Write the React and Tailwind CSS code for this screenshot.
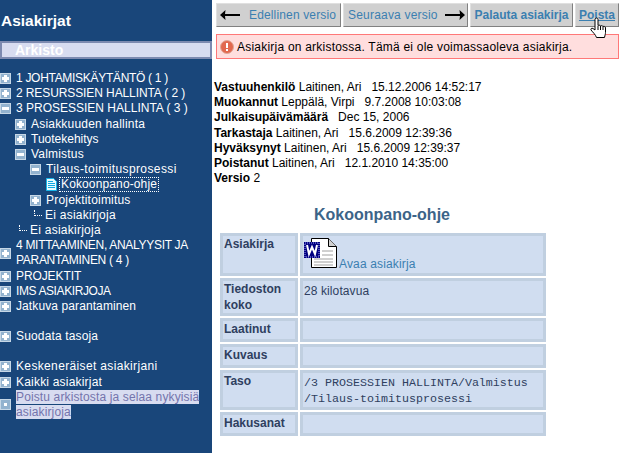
const mainFont = "font-['Liberation_Sans',Arial,sans-serif]";

function BoxIcon({ type = "plus" }) {
  return (
    <svg width="11" height="11" viewBox="0 0 11 11" className="shrink-0 block">
      <rect width="11" height="11" fill="#93b3cf" />
      <rect x="0.5" y="0.5" width="10" height="10" fill="none" stroke="#c6d7e6" />
      {type !== "dot" && <rect x="2" y="4" width="7" height="3" fill="#fff" />}
      {type === "plus" && <rect x="4" y="2" width="3" height="7" fill="#fff" />}
      {type === "dot" && <rect x="4" y="4" width="3" height="3" fill="#fff" />}
    </svg>
  );
}

function Row({ level = 0, icon = "plus", tracking = "", children }) {
  const indent = ["pl-0", "pl-[15px]", "pl-[30px]"][level];
  return (
    <div className={`flex items-center h-[15.2px] ${indent}`}>
      <BoxIcon type={icon} />
      <span className={`ml-[5px] whitespace-nowrap ${tracking}`}>{children}</span>
    </div>
  );
}

function EmptyRow({ level = 1 }) {
  const indent = level === 1 ? "pl-[19px]" : "pl-[34px]";
  return (
    <div className={`flex items-center h-[15.2px] ${indent}`}>
      <span className="w-[8px] h-[6px] mb-[5px] border-l border-b border-dotted border-white shrink-0" />
      <span className="ml-[3px] whitespace-nowrap tracking-[0.25px]">Ei asiakirjoja</span>
    </div>
  );
}

function Sidebar() {
  return (
    <aside className="w-[212px] shrink-0 bg-[#19467a] text-white text-[12px] leading-[15px]">
      <h1 className="pt-[12px] h-[41px] pl-[1px] text-[15.5px] leading-[18px] font-bold">Asiakirjat</h1>
      <div className="h-[18px] bg-[#d8dcf0] border-2 border-[#7d8ab0] pl-[13px] text-[14px] leading-[14px] font-bold text-white">
        Arkisto
      </div>

      <nav className="pt-[12px]">
        <Row tracking="tracking-[-0.3px]">1 JOHTAMISKÄYTÄNTÖ ( 1 )</Row>
        <Row tracking="tracking-[-0.1px]">2 RESURSSIEN HALLINTA ( 2 )</Row>
        <Row icon="minus">3 PROSESSIEN HALLINTA ( 3 )</Row>
        <Row level={1} tracking="tracking-[0.2px]">Asiakkuuden hallinta</Row>
        <Row level={1}>Tuotekehitys</Row>
        <Row level={1} icon="minus" tracking="tracking-[0.2px]">Valmistus</Row>
        <Row level={2} icon="minus" tracking="tracking-[0.4px]">Tilaus-toimitusprosessi</Row>
        <div className="flex items-center h-[15.2px] pl-[46px]">
          <svg width="11" height="13" viewBox="0 0 11 13" className="shrink-0">
            <path d="M0.5 0.5H7.5L10.5 3.5V12.5H0.5Z" fill="#e8fbff" stroke="#18b4e8" />
            <path d="M2 3.5H7M2 5.5H9M2 7.5H9M2 9.5H9" stroke="#10a8e0" />
          </svg>
          <span className="ml-[2px] px-[1px] h-[15px] border border-dotted border-white leading-[13px] tracking-[0.13px] whitespace-nowrap">
            Kokoonpano-ohje
          </span>
        </div>
        <Row level={2} tracking="tracking-[0.2px]">Projektitoimitus</Row>
        <EmptyRow level={2} />
        <EmptyRow level={1} />
        <div className="flex items-center">
          <BoxIcon />
          <span className="ml-[5px] leading-[15.2px] tracking-[-0.3px] whitespace-nowrap">
            4 MITTAAMINEN, ANALYYSIT JA
            <br />
            PARANTAMINEN ( 4 )
          </span>
        </div>
        <Row tracking="tracking-[-0.1px]">PROJEKTIT</Row>
        <Row tracking="tracking-[-0.4px]">IMS ASIAKIRJOJA</Row>
        <Row tracking="tracking-[0.1px]">Jatkuva parantaminen</Row>
        <div className="mt-[15px]">
          <Row tracking="tracking-[0.15px]">Suodata tasoja</Row>
        </div>
        <div className="mt-[15px]">
          <Row tracking="tracking-[0.35px]">Keskeneräiset asiakirjani</Row>
          <Row tracking="tracking-[0.2px]">Kaikki asiakirjat</Row>
        </div>
        <div className="flex items-center">
          <BoxIcon type="dot" />
          <span className="ml-[5px] leading-[15.2px] tracking-[0.13px] whitespace-nowrap">
            <span className="bg-[#d8dcf0] text-[#7474ac]">Poistu arkistosta ja selaa nykyisiä</span>
            <br />
            <span className="bg-[#d8dcf0] text-[#7474ac]">asiakirjoja</span>
          </span>
        </div>
      </nav>
    </aside>
  );
}

function ToolButton({ className = "", children }) {
  return (
    <div
      className={`flex items-center h-[24px] bg-[#d0d0d0] border border-[#e0e0e0] border-r-[#808080] border-b-[#808080] text-[#3b7fb0] whitespace-nowrap ${className}`}
    >
      {children}
    </div>
  );
}

function Arrow({ flip = false }) {
  return (
    <svg width="20" height="10" viewBox="0 0 20 10" className={flip ? "rotate-180" : ""}>
      <path d="M5.5 0L0 5L5.5 10L5 6H20V4H5Z" fill="#000" />
    </svg>
  );
}

function HandCursor() {
  return (
    <svg width="18" height="22" viewBox="0 0 18 22" className="absolute left-[590px] top-[17px]">
      <path
        d="M5.5 1.5C6.5 0.5 8 1 8 2.5V8.5C9 8 10 8 10.5 9C11.5 8.5 12.5 8.5 13 9.5C14 9 15.5 9.5 15.5 11V15.5C15.5 17 15 18 14.5 20.5H6.5C5.5 17.5 3 15.5 1 13C0.5 12 1.5 10.5 3 11.5L5 13V2.5Z"
        fill="#fff"
        stroke="#000"
      />
      <path d="M8 9V13M10.5 9V13M13 9.5V13" stroke="#000" fill="none" />
    </svg>
  );
}

function Cell({ label, rowClass, children }) {
  return (
    <div className={`grid grid-cols-[78px_246px] gap-[2px] leading-[16px] ${rowClass}`}>
      <div className="border-[3px] border-[#c0cfe0] bg-[#d0ddf0] font-bold text-[#2f3f5f] pl-[1px]">{label}</div>
      <div className="border-[3px] border-[#c0cfe0] bg-[#d0ddf0] text-[#2f3f5f] pl-[1px]">{children}</div>
    </div>
  );
}

const meta = [
  ["Vastuuhenkilö", "Laitinen, Ari \u00a0 15.12.2006 14:52:17"],
  ["Muokannut", "Leppälä, Virpi \u00a0 9.7.2008 10:03:08"],
  ["Julkaisupäivämäärä", "\u00a0 Dec 15, 2006"],
  ["Tarkastaja", "Laitinen, Ari \u00a0 15.6.2009 12:39:36"],
  ["Hyväksynyt", "Laitinen, Ari \u00a0 15.6.2009 12:39:37"],
  ["Poistanut", "Laitinen, Ari \u00a0 12.1.2010 14:35:00"],
  ["Versio", "2"],
];

export default function App() {
  return (
    <div className={`relative flex w-[623px] h-[453px] overflow-hidden bg-white text-[12px] leading-[15px] ${mainFont}`}>
      <Sidebar />

      <main className="flex-1 pl-[2px]">
        <div className="flex gap-[2px] pl-[2px] pt-[3px]">
          <ToolButton className="w-[125px] pl-[3px]">
            <Arrow />
            <span className="ml-[9px] tracking-[0.15px]">Edellinen versio</span>
          </ToolButton>
          <ToolButton className="w-[125px] pl-[4px]">
            <span className="tracking-[0.2px]">Seuraava versio</span>
            <span className="ml-[7px]"><Arrow flip /></span>
          </ToolButton>
          <ToolButton className="w-[103px] justify-center font-bold">Palauta asiakirja</ToolButton>
          <ToolButton className="w-[44px] justify-center font-bold underline">Poista</ToolButton>
        </div>

        <div className="flex items-center ml-[2px] mt-[7px] w-[403px] h-[25px] bg-[#ffdede] border border-[#ff7878] pl-[3px] text-black">
          <svg width="14" height="14" viewBox="0 0 14 14" className="shrink-0">
            <circle cx="7" cy="7" r="6.5" fill="#e2694f" stroke="#e0a898" />
            <rect x="6" y="3" width="2" height="5" fill="#fff" />
            <rect x="6" y="9" width="2" height="2" fill="#fff" />
          </svg>
          <span className="ml-[3px] pt-[1px] tracking-[0.22px] whitespace-nowrap">
            Asiakirja on arkistossa. Tämä ei ole voimassaoleva asiakirja.
          </span>
        </div>

        <div className="mt-[21px] text-black">
          {meta.map(([key, value]) => (
            <div key={key} className="h-[15.2px] whitespace-nowrap">
              <b>{key}</b> {value}
            </div>
          ))}
        </div>

        <h2 className="mt-[20px] w-[336px] text-center text-[16px] leading-[18px] font-bold text-[#3c6488]">Kokoonpano-ohje</h2>

        <div className="mt-[9px] ml-[6px] flex flex-col gap-[2px]">
          <Cell label="Asiakirja" rowClass="h-[43px]">
            <div className="flex items-end pt-[2px]">
              <svg width="33" height="30" viewBox="0 0 33 30" className="shrink-0">
                <path d="M7.5 0.5H24.5L32.5 8.5V29.5H7.5Z" fill="#fff" stroke="#000" />
                <path d="M24.5 0.5V8.5H32.5" fill="#d0d0d0" stroke="#000" />
                <path d="M18 13H29M18 17H29M10 21H29M10 24H29M10 27H29" stroke="#a0a0a0" />
                <rect x="0" y="4" width="16" height="16" fill="#000080" />
                <rect x="1" y="5" width="14" height="14" fill="none" stroke="#a0a0f0" strokeDasharray="1 1" />
                <path d="M3 7L5 16L8 9L11 16L13 7" fill="none" stroke="#fff" strokeWidth="2" />
              </svg>
              <a className="ml-[2px] mb-[-3px] text-[#3b7fb0] leading-[14px] tracking-[0.15px]">Avaa asiakirja</a>
            </div>
          </Cell>
          <Cell label="Tiedoston koko" rowClass="h-[38px]">
            <div className="pt-[2px] tracking-[0.1px]">28 kilotavua</div>
          </Cell>
          <Cell label="Laatinut" rowClass="h-[24px]" />
          <Cell label="Kuvaus" rowClass="h-[24px]" />
          <Cell label="Taso" rowClass="h-[40px]">
            <div className="font-['Liberation_Mono',monospace] text-[11.67px] leading-[16px] pt-[2px]">
              /3 PROSESSIEN HALLINTA/Valmistus
              <br />
              /Tilaus-toimitusprosessi
            </div>
          </Cell>
          <Cell label="Hakusanat" rowClass="h-[24px]" />
        </div>
      </main>

      <HandCursor />
    </div>
  );
}
